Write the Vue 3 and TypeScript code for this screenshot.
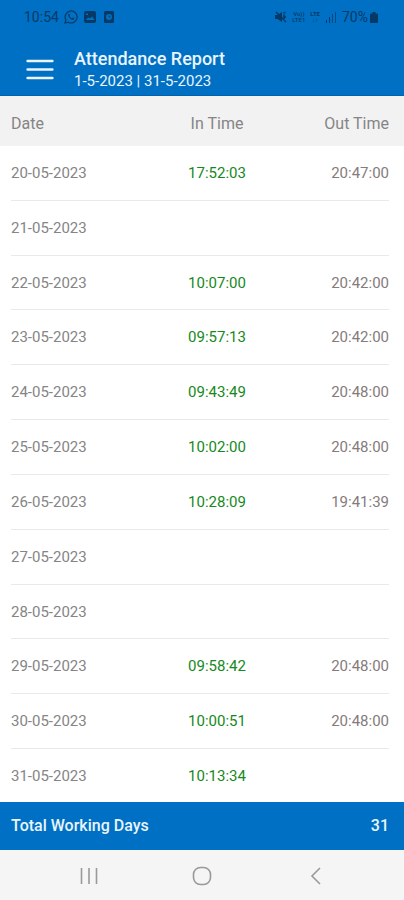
<script setup lang="ts">
interface AttendanceRow {
  date: string
  inTime: string
  outTime: string
}

const rows: AttendanceRow[] = [
  { date: '20-05-2023', inTime: '17:52:03', outTime: '20:47:00' },
  { date: '21-05-2023', inTime: '', outTime: '' },
  { date: '22-05-2023', inTime: '10:07:00', outTime: '20:42:00' },
  { date: '23-05-2023', inTime: '09:57:13', outTime: '20:42:00' },
  { date: '24-05-2023', inTime: '09:43:49', outTime: '20:48:00' },
  { date: '25-05-2023', inTime: '10:02:00', outTime: '20:48:00' },
  { date: '26-05-2023', inTime: '10:28:09', outTime: '19:41:39' },
  { date: '27-05-2023', inTime: '', outTime: '' },
  { date: '28-05-2023', inTime: '', outTime: '' },
  { date: '29-05-2023', inTime: '09:58:42', outTime: '20:48:00' },
  { date: '30-05-2023', inTime: '10:00:51', outTime: '20:48:00' },
  { date: '31-05-2023', inTime: '10:13:34', outTime: '' },
]

const workingDays = 31
</script>

<template>
  <div class="screen">
    <div class="status">
      <div class="status-group">
        <span>10:54</span>
        <svg class="status-icon" viewBox="0 0 14 14" fill="none" stroke="currentColor">
          <path d="M1 13l.9-3.1A6 6 0 1 1 4.200 12.200z" stroke-width="1.200" />
          <path d="M4.300 4.300c.7-1 1.200-.6 1.700.9l-.5.8c.5 1.100 1.300 1.900 2.500 2.400l.8-.8c1.300.4 2 .9 1.300 1.700-2 2.200-6.800-2.500-5.800-5z" fill="currentColor" stroke="none" />
        </svg>
        <svg class="status-icon" viewBox="0 0 14 14">
          <path fill="currentColor" fill-rule="evenodd" d="M3 1h8a2 2 0 0 1 2 2v8a2 2 0 0 1-2 2H3a2 2 0 0 1-2-2V3a2 2 0 0 1 2-2zM3 10h8.500L9 6.500 7 8.500 5 7.500zM3 3.500V5h2V3.500z" />
        </svg>
        <svg class="status-icon" viewBox="0 0 14 14">
          <path fill="currentColor" fill-rule="evenodd" d="M3.500 1h7A1.500 1.500 0 0 1 12 2.500v9a1.500 1.500 0 0 1-1.500 1.500h-7A1.500 1.500 0 0 1 2 11.500v-9A1.500 1.500 0 0 1 3.500 1zM7 4a3 3 0 1 0 0 6 3 3 0 0 0 0-6z" />
          <path d="M7 5.500V7h1.500" fill="none" stroke="currentColor" />
        </svg>
      </div>
      <div class="status-group">
        <svg class="mute-icon" viewBox="0 0 12 12">
          <path d="M0 4h2.500L7 1v10L2.500 8H0z" fill="currentColor" />
          <path d="M1 1l10 10M8.500 3.500c1.500 1 1.500 4 0 5M8 6h3M8.500 2l2-.5" fill="none" stroke="currentColor" stroke-width="1.500" />
        </svg>
        <span class="network"><span>Vo))</span><span>LTE1</span></span>
        <span class="network network-strong"><span>LTE</span><span>↓↑</span></span>
        <svg class="signal-icon" viewBox="0 0 12 12" fill="currentColor">
          <path d="M1 9h1v3H1zM4 6h1v6H4z" />
          <path d="M7 3h1v9H7zM10 1h1v11h-1z" opacity=".7" />
        </svg>
        <span class="charge">
          70%
          <svg class="battery-icon" viewBox="0 0 8 12" fill="currentColor">
            <path d="M2.500 1h3v1.500H7q1 0 1 1V11q0 1-1 1H1q-1 0-1-1V3.500q0-1 1-1h1.500z" />
          </svg>
        </span>
      </div>
    </div>

    <header class="app-bar">
      <button class="menu" type="button" aria-label="Menu">
        <svg viewBox="0 0 26 20" stroke="currentColor" stroke-width="2.400" stroke-linecap="round">
          <path d="M1.200 2h23.600M1.200 10h23.600M1.200 18h23.600" />
        </svg>
      </button>
      <div class="heading">
        <h1>Attendance Report</h1>
        <p>1-5-2023 | 31-5-2023</p>
      </div>
    </header>

    <table class="report">
      <thead>
        <tr>
          <th scope="col">Date</th>
          <th scope="col">In Time</th>
          <th scope="col">Out Time</th>
        </tr>
      </thead>
      <tbody>
        <tr v-for="row in rows" :key="row.date">
          <td>{{ row.date }}</td>
          <td class="in">{{ row.inTime }}</td>
          <td class="out">{{ row.outTime }}</td>
        </tr>
      </tbody>
    </table>

    <footer class="total">
      <span>Total Working Days</span>
      <span>{{ workingDays }}</span>
    </footer>

    <nav class="system-nav">
      <button type="button" aria-label="Recent apps">
        <svg viewBox="0 0 20 20"><path d="M2.500 2v16M10 2v16M17.500 2v16" /></svg>
      </button>
      <button type="button" aria-label="Home">
        <svg viewBox="0 0 20 20"><rect x="1.500" y="1.500" width="17" height="17" rx="7" /></svg>
      </button>
      <button type="button" aria-label="Back">
        <svg viewBox="0 0 20 20"><path d="M15 2L7 10l8 8" /></svg>
      </button>
    </nav>
  </div>
</template>

<style>
body {
  margin: 0;
  background: #fff;
}
</style>

<style scoped>
.screen {
  display: flex;
  flex-direction: column;
  min-height: 100vh;
  font-family: Roboto, 'Liberation Sans', sans-serif;
  color: #858585;
}

button {
  display: flex;
  padding: 0;
  border: 0;
  background: none;
  color: inherit;
}

.status {
  display: flex;
  justify-content: space-between;
  align-items: center;
  height: 34px;
  padding: 0 26px 0 24px;
  background: #0070c4;
  color: #073966;
  font-size: 14px;
}

.status-group {
  display: flex;
  align-items: center;
  gap: 5px;
}

.status-icon {
  width: 14px;
  height: 14px;
}

.mute-icon,
.signal-icon {
  width: 12px;
  height: 12px;
}

.charge {
  display: flex;
  align-items: center;
  gap: 2px;
}

.battery-icon {
  width: 8px;
  height: 12px;
}

.network {
  display: flex;
  flex-direction: column;
  align-items: center;
  font-size: 6px;
  font-weight: 500;
  line-height: 6px;
}

.network-strong {
  font-weight: 700;
}

.app-bar {
  display: flex;
  align-items: center;
  gap: 20px;
  height: 62px;
  padding: 10px 26px 0;
  border-bottom: 1px solid #0062ae;
  background: #0070c4;
  color: #e9f4fc;
}

.app-bar,
.total {
  box-sizing: border-box;
}

.menu svg {
  width: 28px;
  height: 21px;
}

h1,
p {
  margin: 0;
  line-height: 22px;
  white-space: nowrap;
}

h1 {
  font-size: 18px;
  font-weight: 500;
}

p {
  font-size: 15px;
}

.report {
  display: flex;
  flex: 1;
  flex-direction: column;
}

thead {
  background: #f2f2f2;
}

thead,
tbody {
  display: grid;
}

/* The list runs slightly under the total bar. */
tbody {
  flex: 1;
  grid-auto-rows: 1fr;
  margin-bottom: -2px;
  padding: 0 15px 0 11px;
}

tr {
  display: grid;
  grid-template-columns: 1fr 1fr 1fr;
  align-items: center;
}

thead tr {
  height: 46px;
  padding: 4px 15px 0 11px;
}

tbody tr {
  min-height: 40px;
  border-bottom: 1px solid #e9e9e9;
}

th,
td {
  padding: 0;
  font-weight: 400;
  text-align: left;
  white-space: nowrap;
}

th {
  font-size: 16px;
}

td {
  font-size: 15px;
}

th:nth-child(2),
td:nth-child(2) {
  padding-left: 34px;
  text-align: center;
}

th:nth-child(3),
td:nth-child(3) {
  text-align: right;
}

.in {
  color: #16891c;
}

.out {
  color: #857b7b;
}

.total {
  position: relative;
  display: flex;
  align-items: center;
  justify-content: space-between;
  height: 48px;
  padding: 0 15px 2px 11px;
  background: #0070c4;
  color: #e9f4fc;
  font-size: 16px;
  font-weight: 500;
}

.system-nav {
  display: flex;
  align-items: center;
  justify-content: center;
  gap: 93px;
  height: 50px;
  padding-top: 1px;
  background: #f5f5f5;
  color: #999;
  box-sizing: border-box;
}

.system-nav svg {
  width: 20px;
  height: 20px;
  fill: none;
  stroke: currentColor;
  stroke-width: 1.600;
}
</style>
